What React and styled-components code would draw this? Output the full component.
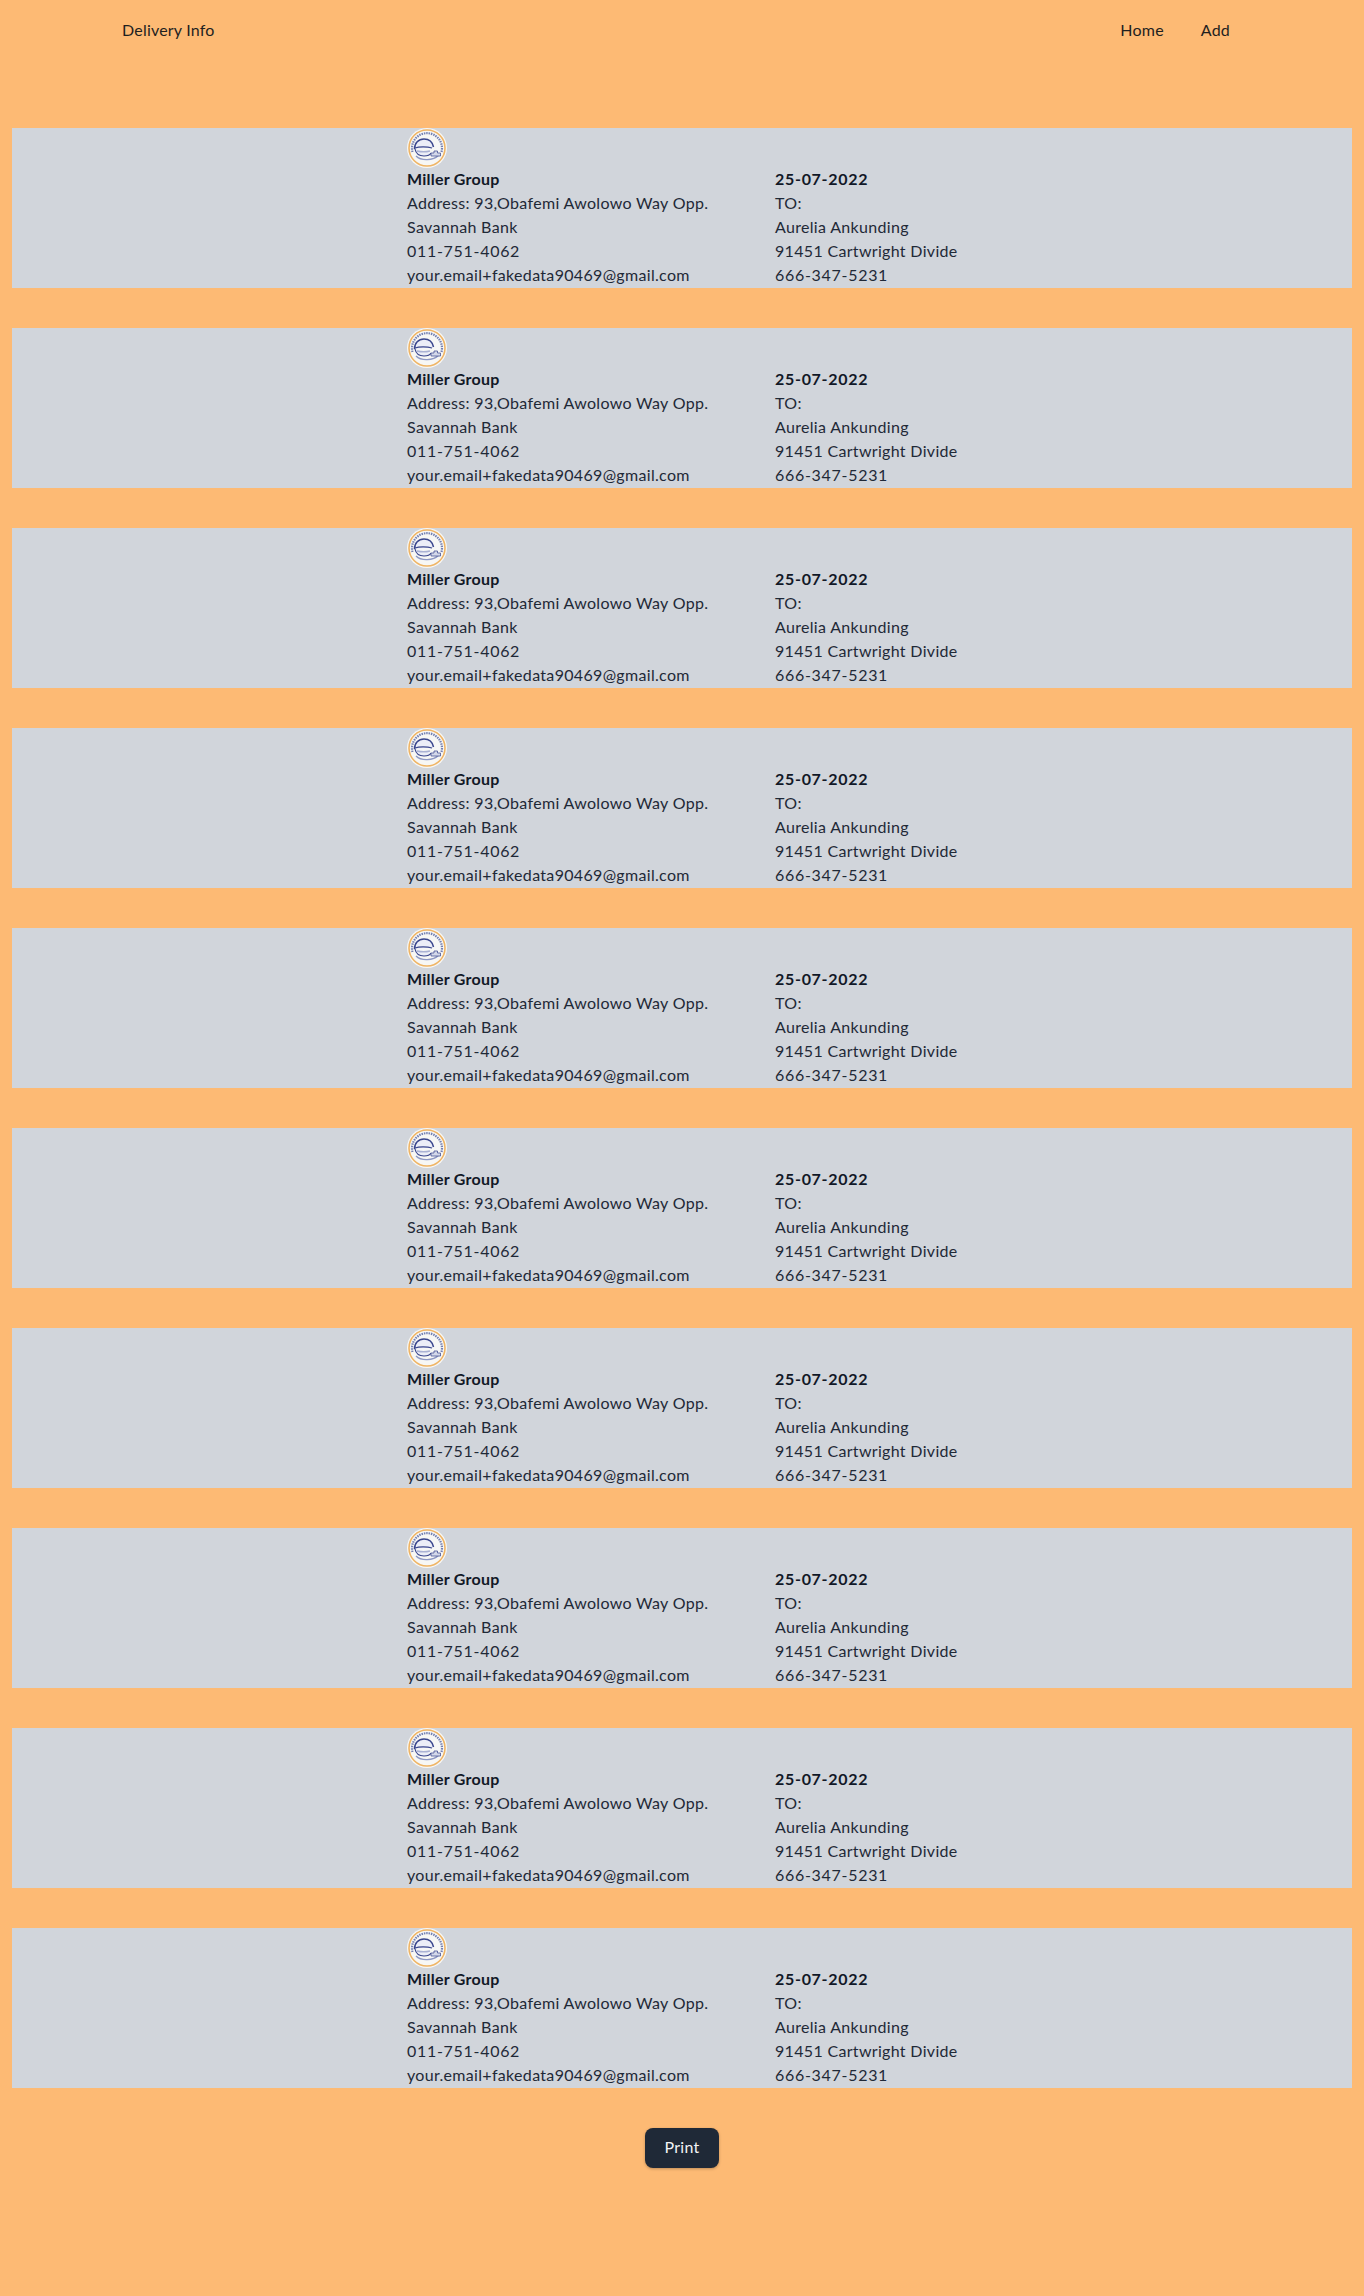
import React from 'react';
import styled, { createGlobalStyle } from 'styled-components';

const GlobalStyle = createGlobalStyle`
  html, body {
    margin: 0;
    padding: 0;
    background: #fdba74;
  }
  body {
    font-family: 'Lato', 'Noto Sans', sans-serif;
    font-size: 16px;
    line-height: 24px;
    letter-spacing: 0.32px;
    color: #1f2937;
  }
`;

const Seal = () => (
  <SealIcon viewBox="0 0 40 40" aria-hidden="true">
    <circle cx="20" cy="20" r="20" fill="#f7f7f5" />
    <circle cx="20" cy="20" r="18" fill="none" stroke="#efb566" strokeWidth="1.6" />
    <path d="M5.5 24A15 15 0 1 1 34.5 24" fill="none" stroke="#7480b3" strokeWidth="2.2" strokeDasharray="1.5 0.9" />
    <path d="M9 28c5 5 17 5 23-1" fill="none" stroke="#8d97c4" strokeWidth="1.4" />
    <path d="M7.5 21c0-6 4-10 9.5-10 5 0 8.500 3 9.500 8" fill="#eceef7" stroke="#3a468d" strokeWidth="1.5" />
    <path d="M8 21c1 5 5 7 9 7 4 0 6-1 7-3" fill="#eceef7" stroke="#3a468d" strokeWidth="1.200" />
    <path d="M8 20c4-1.500 12-1.500 17 0" fill="none" stroke="#3a468d" strokeWidth="1.100" />
    <path d="M10 23c4 1 9 1 13 0" fill="none" stroke="#aab1d3" strokeWidth="1.500" />
    <path d="M24 28v-3h3v-2h3.500v2h3v3z" fill="#d5d9ea" stroke="#4a5698" strokeWidth="0.800" />
  </SealIcon>
);

const DeliveryCard = ({ delivery }) => (
  <Card>
    <Inner>
      <Sender>
        <Seal />
        <Name>{delivery.company}</Name>
        <Line>Address: {delivery.address}</Line>
        <Line $digits>{delivery.phone}</Line>
        <Line>{delivery.email}</Line>
      </Sender>
      <Receiver>
        <Name $digits>{delivery.date}</Name>
        <Line>TO:</Line>
        <Line>{delivery.recipient}</Line>
        <Line>{delivery.street}</Line>
        <Line $digits>{delivery.recipientPhone}</Line>
      </Receiver>
    </Inner>
  </Card>
);

const delivery = {
  company: 'Miller Group',
  address: '93,Obafemi Awolowo Way Opp. Savannah Bank',
  phone: '011-751-4062',
  email: 'your.email+fakedata90469@gmail.com',
  date: '25-07-2022',
  recipient: 'Aurelia Ankunding',
  street: '91451 Cartwright Divide',
  recipientPhone: '666-347-5231',
};

const deliveries = Array.from({ length: 10 }, (_, i) => ({ ...delivery, id: i }));

const App = () => (
  <Page>
    <GlobalStyle />
    <Nav>
      <NavLink href="#">Delivery Info</NavLink>
      <NavLinks>
        <NavLink href="#">Home</NavLink>
        <NavLink href="#">Add</NavLink>
      </NavLinks>
    </Nav>
    <List>
      {deliveries.map(d => (
        <DeliveryCard key={d.id} delivery={d} />
      ))}
    </List>
    <PrintRow>
      <PrintButton type="button">Print</PrintButton>
    </PrintRow>
  </Page>
);

const Page = styled.div`
  min-height: 2296px;
  box-sizing: border-box;
`;

const Nav = styled.nav`
  display: flex;
  align-items: center;
  justify-content: space-between;
  height: 60px;
  padding: 0 134px 0 122px;
`;

const NavLinks = styled.div`
  display: flex;
  gap: 37px;
`;

const NavLink = styled.a`
  color: #1f1f1f;
  font-size: 16px;
  letter-spacing: 0.2px;
  text-decoration: none;
`;

const List = styled.div`
  display: flex;
  flex-direction: column;
  gap: 40px;
  margin: 68px 12px 0;
`;

const Card = styled.section`
  display: flex;
  justify-content: center;
  height: 160px;
  background: #d1d5db;
`;

const Inner = styled.div`
  display: grid;
  grid-template-columns: 320px 182px;
  column-gap: 48px;
  width: 550px;
`;

const Sender = styled.div`
  display: flex;
  flex-direction: column;
  align-items: flex-start;
`;

const Receiver = styled.div`
  display: flex;
  flex-direction: column;
  padding-top: 39px;
  white-space: nowrap;
`;

const SealIcon = styled.svg`
  display: block;
  flex: none;
  width: 40px;
  height: 40px;
  margin-bottom: -1px;
`;

const Name = styled.div`
  font-weight: 700;
  color: #111827;
  letter-spacing: ${p => (p.$digits ? '0.7px' : '0.25px')};
`;

const Line = styled.div`
  color: #1f2937;
  letter-spacing: ${p => (p.$digits ? '0.7px' : 'inherit')};
`;

const PrintRow = styled.div`
  display: flex;
  justify-content: center;
  margin-top: 40px;
`;

const PrintButton = styled.button`
  width: 74px;
  height: 40px;
  padding: 0 0 3px;
  border: 0;
  border-radius: 8px;
  background: #1f2937;
  color: #f3f4f6;
  font-family: inherit;
  font-size: 16px;
  letter-spacing: 0.3px;
  box-shadow: 0 1px 3px rgba(0, 0, 0, 0.25);
`;

export default App;
